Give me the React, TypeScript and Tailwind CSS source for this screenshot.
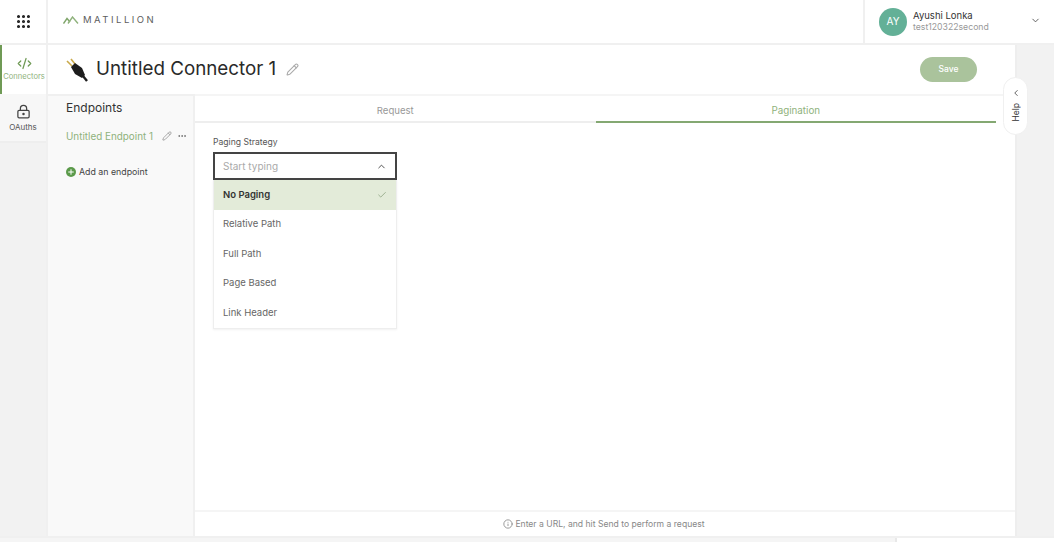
import React from "react";
import { ChevronDown, ChevronUp, Check, Pencil, Info, Plus, Grip, CodeXml, LockKeyhole, MoreHorizontal } from "lucide-react";

const Logo = () => (
  <svg width="16" height="8" viewBox="0 0 16 8" fill="none" strokeWidth="1.4">
    <path d="M0.5 7.5 L4 2.5 L7 6" stroke="#7fa56a" />
    <path d="M5 7.5 L9.5 1 L15 7.5" stroke="#8fb27c" />
  </svg>
);

const Plug = () => (
  <svg width="24" height="24" viewBox="0 0 24 24">
    <path d="M2 3 L7 8 M6 1 L10 6" stroke="#c9a94b" strokeWidth="1.6" />
    <path d="M6 9 L10 5 L17 10 L20 17 L17 20 L10 16 Z" fill="#1d1d1d" />
    <path d="M18 18 L22 23" stroke="#1d1d1d" strokeWidth="2.4" />
  </svg>
);

const options = ["No Paging", "Relative Path", "Full Path", "Page Based", "Link Header"];

export default function App() {
  return (
    <div className="relative flex h-[542px] w-[1054px] flex-col overflow-hidden bg-white font-['Inter','Liberation_Sans',sans-serif] text-[#222]">
      <header className="flex h-[45px] shrink-0 border-b-2 border-[#f0f0f0]">
        <div className="flex w-[48px] items-center justify-center border-r-2 border-[#f0f0f0]">
          <Grip size={17} strokeWidth={2.4} color="#222" />
        </div>
        <div className="flex flex-1 items-center gap-1 pl-[15px] pb-[3px]">
          <Logo />
          <span className="text-[9.5px] tracking-[2.5px] text-[#5d5d5d]">MATILLION</span>
        </div>
        <div className="flex w-[191px] items-center border-l-2 border-[#f0f0f0] pl-[14px]">
          <div className="flex h-[28px] w-[28px] items-center justify-center rounded-full bg-[#63b097] text-[10px] text-white">AY</div>
          <div className="ml-[6px] flex-1 pb-[2px]">
            <div className="text-[9.5px] leading-[12px] text-[#333]">Ayushi Lonka</div>
            <div className="text-[8.7px] leading-[10px] text-[#999]">test120322second</div>
          </div>
          <ChevronDown size={11} className="mr-[13px] mb-[3px]" color="#555" />
        </div>
      </header>

      <div className="flex flex-1">
        <nav className="flex w-[48px] shrink-0 flex-col border-r-2 border-[#f0f0f0] bg-[#f2f2f2]">
          <div className="flex h-[49px] flex-col items-center justify-center border-l-2 border-[#6f9a55] bg-white pb-[2px]">
            <CodeXml size={15} color="#6f9a55" />
            <span className="mt-[2px] text-[7.6px] leading-[8px] text-[#8fb27c]">Connectors</span>
          </div>
          <div className="flex h-[49px] flex-col items-center justify-center border-b-2 border-[#eeeeee] bg-[#f7f7f7]">
            <LockKeyhole size={15} color="#444" className="mb-[1px]" />
            <span className="mt-[3px] text-[8px] leading-[8px] text-[#555]">OAuths</span>
          </div>
        </nav>

        <main className="flex flex-1 flex-col">
          <div className="flex h-[49px] shrink-0 items-center pr-[38px] pl-[17px]">
            <Plug />
            <h1 className="ml-[7px] text-[18.8px] font-normal text-[#2a2a2a]">Untitled Connector 1</h1>
            <Pencil size={13} color="#aaa" className="ml-[10px]" />
            <button className="ml-auto h-[25px] w-[57px] rounded-full bg-[#aac39c] text-[8.5px] font-medium text-white">Save</button>
          </div>

          <div className="flex flex-1">
            <aside className="w-[147px] shrink-0 border-t-2 border-r-2 border-[#f0f0f0] bg-[#f9f9f9] pl-[18px]">
              <h2 className="mt-[4px] text-[12px] leading-[16px] font-normal text-[#333]">Endpoints</h2>
              <div className="mt-[14px] flex items-center">
                <span className="text-[9.9px] leading-[12px] text-[#8fb27c]">Untitled Endpoint 1</span>
                <Pencil size={10} color="#999" className="ml-[9px]" />
                <MoreHorizontal size={10} color="#666" className="ml-[5px]" />
              </div>
              <div className="mt-[24px] flex items-center gap-[3px]">
                <span className="flex h-[10px] w-[10px] items-center justify-center rounded-full bg-[#5b9a4a]">
                  <Plus size={8} color="#fff" strokeWidth={3} />
                </span>
                <span className="text-[8.8px] leading-[12px] text-[#444]">Add an endpoint</span>
              </div>
            </aside>

            <section className="flex flex-1 flex-col border-t-2 border-[#f5f5f5]">
              <div className="flex h-[27px] shrink-0 pr-[19px]">
                <div className="flex flex-1 items-center justify-center border-b-2 border-[#eeeeee] pt-[5px] text-[9.6px] text-[#999]">Request</div>
                <div className="flex flex-1 items-center justify-center border-b-2 border-[#84a872] pt-[5px] text-[9.8px] text-[#8fb27c]">Pagination</div>
              </div>
              <div className="flex-1 pt-[14px] pl-[18px]">
                <label className="block text-[8.6px] leading-[10px] text-[#555]">Paging Strategy</label>
                <div className="mt-[5px] w-[184px]">
                  <div className="flex h-[28px] items-center justify-between border-2 border-[#444] px-[8px] text-[10px] text-[#aaa]">
                    Start typing
                    <ChevronUp size={11} color="#444" />
                  </div>
                  <ul className="border-x border-b border-[#eeeeee] shadow-[0_1px_2px_rgba(0,0,0,0.06)]">
                    {options.map((o, i) => (
                      <li
                        key={o}
                        className={
                          i === 0
                            ? "flex h-[29.5px] items-center justify-between bg-[#e3ebd9] px-[9px] text-[9.5px] font-semibold text-[#333]"
                            : "flex h-[29.5px] items-center justify-between bg-white px-[9px] text-[9.5px] text-[#666]"
                        }
                      >
                        {o}
                        {i === 0 && <Check size={10} color="#8fa583" />}
                      </li>
                    ))}
                  </ul>
                </div>
              </div>
              <div className="flex h-[26px] shrink-0 items-center justify-center gap-[2px] border-t-2 border-[#f5f5f5] pr-[2px] text-[8.6px] text-[#888]">
                <Info size={10} color="#888" />
                Enter a URL, and hit Send to perform a request
              </div>
            </section>
          </div>
        </main>

        <div className="w-[39px] shrink-0 border-l-2 border-[#eeeeee] bg-[#f2f2f2]" />
      </div>

      <footer className="flex h-[6px] shrink-0 justify-end border-t-2 border-[#f0f0f0] bg-[#f5f5f5]">
        <div className="w-[159px] border-l-2 border-[#e8e8e8] bg-white" />
      </footer>

      <div className="absolute top-[77px] left-[1003px] flex h-[58px] w-[25px] flex-col items-center rounded-full border border-[#f0f0f0] bg-white pt-[10px]">
        <ChevronUp size={10} color="#444" className="-rotate-90" />
        <span className="mt-[5px] rotate-180 text-[8.5px] leading-[10px] text-[#333] [writing-mode:vertical-rl]">Help</span>
      </div>
    </div>
  );
}
